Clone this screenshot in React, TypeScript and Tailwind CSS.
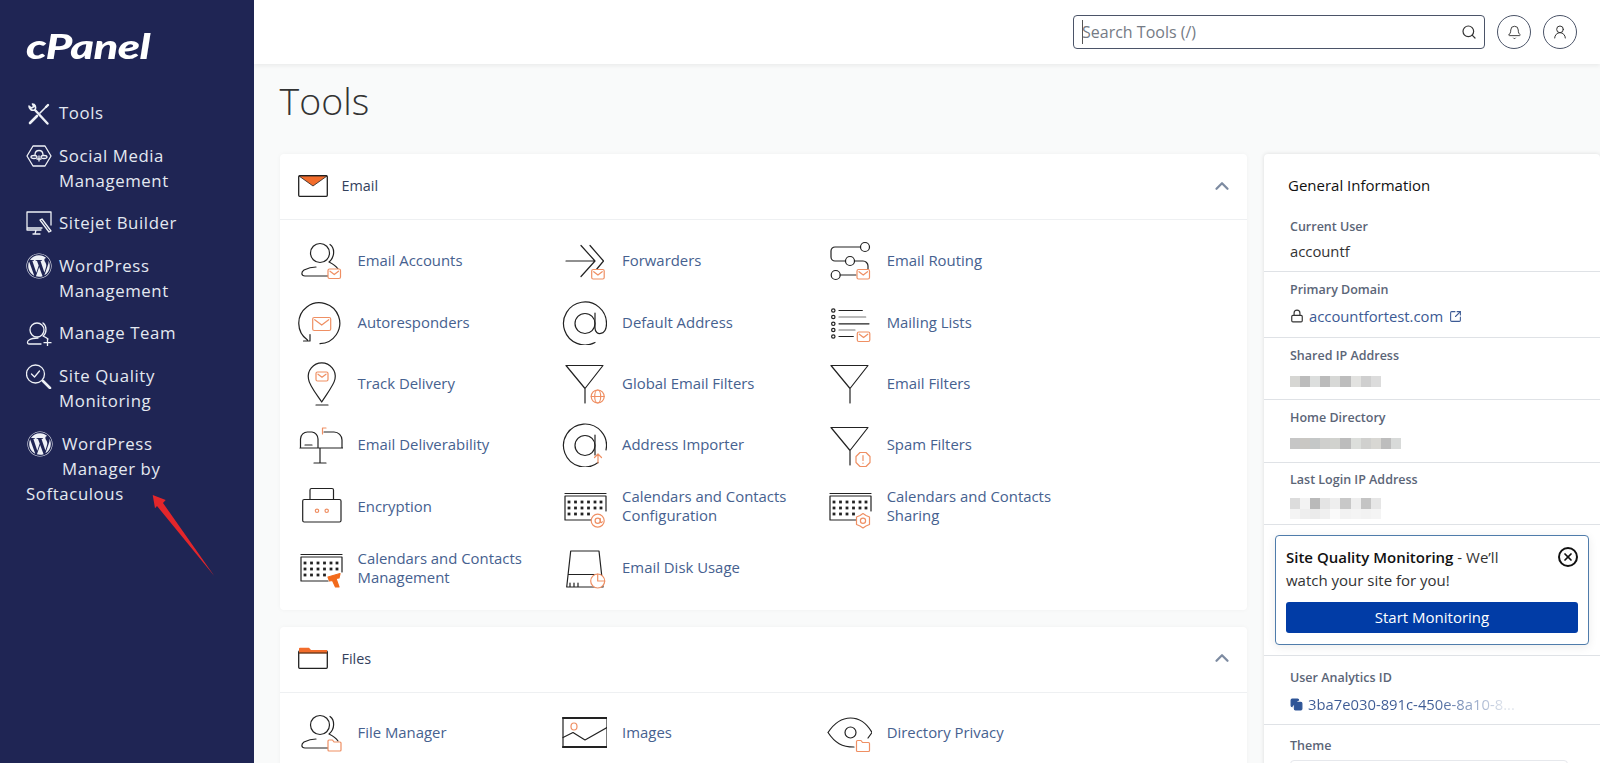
import { ReactNode } from 'react'
import { FaWordpress } from 'react-icons/fa'
import { ChevronUp, Search, Bell, UserRound, Lock, SquareArrowOutUpRight, Copy, X } from 'lucide-react'

const ORANGE = '#ef8f63'

function Ico({ children }: { children: ReactNode }) {
  return (
    <svg viewBox="0 0 45 45" className="w-[45px] h-[45px] shrink-0" fill="none" stroke="#222" strokeWidth="1.2" strokeLinecap="round" strokeLinejoin="round">
      {children}
    </svg>
  )
}

function MailBadge({ x, y, w = 12.5, h = 9.5 }: { x: number; y: number; w?: number; h?: number }) {
  return (
    <g stroke={ORANGE}>
      <rect x={x} y={y} width={w} height={h} rx="1.5" fill="#fff" />
      <path d={`M${x + 2} ${y + 2.2} L${x + w / 2} ${y + h * 0.58} L${x + w - 2} ${y + 2.2}`} />
    </g>
  )
}

function FolderBadge({ x, y }: { x: number; y: number }) {
  return <path stroke={ORANGE} fill="#fff" d={`M${x} ${y + 1} a1 1 0 0 1 1 -1 h3.5 l1.5 2 h6 a1 1 0 0 1 1 1 v7 a1 1 0 0 1 -1 1 h-11 a1 1 0 0 1 -1 -1 z`} />
}

function Person() {
  return (
    <>
      <circle cx="22" cy="15" r="9.5" />
      <path d="M32 6.5 C37 10 37 19 31 24 C35 26 38 28 40 31" />
      <path d="M30 38 H7 C3 38 3 34 6 32 C10 30 14 29 18 29" />
    </>
  )
}

function Funnel({ top = 4.5 }: { top?: number }) {
  return <path d={`M4 ${top} H41 L23 ${top + 23} Z M23 ${top + 23} V${top + 37.5}`} fill="#fff" />
}

function Calendar() {
  const rows = [18, 24, 30]
  const cols = [7, 13.5, 20, 26.5, 33, 39]
  return (
    <>
      <path d="M3 9.5 H44 M3 12 H44 M3 12 V36 H30 M44 12 V27" />
      {rows.map((y, r) =>
        cols.slice(0, r === 2 ? 4 : 6).map((x) => <rect key={`${x}-${y}`} x={x - 1.4} y={y - 1.4} width="2.8" height="2.8" fill="#222" stroke="none" />),
      )}
    </>
  )
}

const emailTools: { label: ReactNode; icon: ReactNode }[] = [
  { label: 'Email Accounts', icon: <Ico><Person /><MailBadge x={30} y={31} /></Ico> },
  { label: 'Forwarders', icon: <Ico><path d="M4 23 H33 M19 7.5 L33 23 L19 38.5 M28 7.5 L41.5 23 L34 32" /><MailBadge x={29.7} y={31.5} /></Ico> },
  { label: 'Email Routing', icon: <Ico><path d="M33.5 9 H8 a4 4 0 0 0 -4 4 v6 a4 4 0 0 0 4 4 H18.5 M27.5 23 H36 a5 5 0 0 1 5 5 V31 M13.2 37 H29" /><circle cx="38" cy="9" r="4.5" /><circle cx="23" cy="23" r="4.5" /><circle cx="8.7" cy="37" r="4.5" /><MailBadge x={30} y={31.5} /></Ico> },
  { label: 'Autoresponders', icon: <Ico><path d="M9.5 40 A20.5 20.5 0 1 1 22 43.7 M12 34.5 V41 H5.5" /><MailBadge x={14.7} y={17.5} w={18} h={13} /></Ico> },
  { label: 'Default Address', icon: <Ico><circle cx="23" cy="23.5" r="10" /><path d="M33 13 V28 C33 36 44.5 36 44.5 23.5 A21.5 21.5 0 1 0 33 42.5" /></Ico> },
  { label: 'Mailing Lists', icon: <Ico>{[10.5, 17, 23.8, 30, 36.5].map((y) => <circle key={y} cx="6.3" cy={y} r="1.7" />)}<path d="M12 10.5 H35.3 M12 23.8 H42 M12 36.5 H26.3" /><path stroke="#777" d="M12 17 H38.7 M12 30 H28" /><MailBadge x={30.3} y={32} /></Ico> },
  { label: 'Track Delivery', icon: <Ico><path d="M10.5 18 A13.5 13.5 0 1 1 37 18 C36 24 28 34 23.7 41 C19 34 11 24 10.5 18 M18 44 H30" /><MailBadge x={18} y={11} w={12} h={9} /></Ico> },
  { label: 'Global Email Filters', icon: <Ico><Funnel /><g stroke={ORANGE}><circle cx="35.7" cy="35.5" r="6.5" fill="#fff" /><ellipse cx="35.7" cy="35.5" rx="3" ry="6.5" /><path d="M29.2 35.5 H42.2" /></g></Ico> },
  { label: 'Email Filters', icon: <Ico><Funnel /></Ico> },
  { label: 'Email Deliverability', icon: <Ico><path d="M2 26 H45 M2.5 26 V17 A7 7 0 0 1 10 10 H14 A7 7 0 0 1 20 17 V26 M26 10 H36 A8 8 0 0 1 44 18 V26 M22 26 V41 M16 41 H28 M7 23 H14" /><path stroke={ORANGE} d="M24.5 12 V6 H28" /></Ico> },
  { label: 'Address Importer', icon: <Ico><circle cx="23" cy="23.5" r="10" /><path d="M33 13 V33 M36 40.6 A21.5 21.5 0 1 1 44 28" /><path stroke={ORANGE} d="M36 41 V32 M32.5 35.5 L36 32 L39.5 35.5" /></Ico> },
  { label: 'Spam Filters', icon: <Ico><Funnel top={5.5} /><g stroke={ORANGE}><path fill="#fff" d="M33 30.5 H39 L43 34.5 V40.5 L39 44.5 H33 L29 40.5 V34.5 Z" /><path d="M36 33.5 V38.5 M36 41 V41.3" /></g></Ico> },
  { label: 'Encryption', icon: <Ico><rect x="4.7" y="15.5" width="38.3" height="22.5" rx="1.5" /><path d="M12 15.5 V6 a1.5 1.5 0 0 1 1.5 -1.5 H34 a1.5 1.5 0 0 1 1.5 1.5 V15.5" /><g stroke={ORANGE}><circle cx="19" cy="26.8" r="1.7" /><circle cx="28.7" cy="26.8" r="1.7" /></g></Ico> },
  { label: <>Calendars and Contacts<br />Configuration</>, icon: <Ico><Calendar /><g stroke={ORANGE}><circle cx="35.7" cy="36.7" r="6.5" fill="#fff" /><circle cx="35.7" cy="36.7" r="2.6" /><path d="M38.3 34.5 V37.5 C38.3 39 40 39 40.2 37.5" /></g></Ico> },
  { label: <>Calendars and Contacts<br />Sharing</>, icon: <Ico><Calendar /><g stroke={ORANGE}><path fill="#fff" d="M36 29.5 L39 31.5 L42.5 33 V40.5 L39 42 L36 44 L33 42 L29.5 40.5 V33 L33 31.5 Z" /><circle cx="36" cy="36.7" r="2.6" /></g></Ico> },
  { label: <>Calendars and Contacts<br />Management</>, icon: <Ico><Calendar /><path fill="#f26a1b" stroke="#f26a1b" d="M30 32 L42 28.5 L41 33 L38 33.5 L41 42 L37.5 42 L34.5 35.5 L31.5 36 Z" /></Ico> },
  { label: 'Email Disk Usage', icon: <Ico><path d="M8.7 6 H37 L41 42 H4.7 Z M6.5 29.5 H39 M8 42 V38 M12 42 V38 M16 42 V38" /><g stroke={ORANGE}><circle cx="35.7" cy="36" r="7" fill="#fff" /><path d="M35.7 29 V36 H42.7" /></g></Ico> },
]

const fileTools: { label: string; icon: ReactNode }[] = [
  { label: 'File Manager', icon: <Ico><Person /><FolderBadge x={30} y={30} /></Ico> },
  { label: 'Images', icon: <Ico><rect x="1" y="7.5" width="44" height="30" /><path strokeWidth="2" d="M1 8 H45 M1 37 H45" /><path d="M1 27.5 L11 22.5 L23 30 L45 17.5" /><ellipse cx="12" cy="16.5" rx="3" ry="3.5" stroke={ORANGE} /></Ico> },
  { label: 'Directory Privacy', icon: <Ico><path d="M1 22.5 C8 12 15 8 23.5 8 C32 8 39 12 45 22.5 L41 28 M1 22.5 C8 33 15 37 27 37" /><circle cx="23.5" cy="22.5" r="5.5" /><FolderBadge x={29.5} y={30.5} /></Ico> },
]

function ToolGrid({ tools, top }: { tools: { label: ReactNode; icon: ReactNode }[]; top: string }) {
  return (
    <div className={`grid grid-cols-[repeat(3,264.6px)] pl-[18px] pb-[11.5px] ${top}`}>
      {tools.map((t, i) => (
        <div key={i} className="flex items-center gap-[15px] h-[61.4px] text-[14.9px] leading-[19px] text-[#46618f]">
          {t.icon}
          <span>{t.label}</span>
        </div>
      ))}
    </div>
  )
}

function Card({ title, icon, children }: { title: string; icon: ReactNode; children: ReactNode }) {
  return (
    <section className="bg-white rounded-[4px] shadow-[0_0_4px_rgba(0,0,0,0.04)]">
      <div className="flex items-center h-[66px] pl-[18px] pr-[14px] pb-[2px] border-b border-[#eef0f2]">
        {icon}
        <span className="ml-[14px] text-[14.4px] text-[#33415c]">{title}</span>
        <ChevronUp className="ml-auto w-[22px] h-[22px] text-[#7d8ba1]" strokeWidth={2.5} />
      </div>
      {children}
    </section>
  )
}

const navClass = 'text-[16.8px] leading-[25px] tracking-[0.6px] text-[#e4e9f1]'

function NavItem({ icon, children }: { icon: ReactNode; children: ReactNode }) {
  return (
    <div className={`flex gap-[7px] ${navClass}`}>
      <span className="w-[26px] h-[26px] shrink-0 flex items-center justify-center">{icon}</span>
      <span className="max-w-[130px]">{children}</span>
    </div>
  )
}

function NavSvg({ children }: { children: ReactNode }) {
  return (
    <svg viewBox="0 0 26 26" className="w-[26px] h-[26px]" fill="none" stroke="#eef1f6" strokeWidth="1.3" strokeLinecap="round" strokeLinejoin="round">
      {children}
    </svg>
  )
}

function Sidebar() {
  return (
    <aside className="relative w-[254px] shrink-0 bg-[#1f2554] pl-[26px]">
      <div className="h-[100px] pt-[22px] text-[35px] leading-[46px] font-black italic tracking-[-0.5px] text-white font-['Lato'] origin-left scale-x-[1.3]">cPanel</div>
      <nav className="flex flex-col gap-[17px]">
        <NavItem icon={<NavSvg><path strokeWidth="2.4" d="M9 10 L21.5 23.5" /><path strokeWidth="2.6" d="M4 23 L11 16" /><path strokeWidth="1.6" d="M14 13 L20 7" /><path strokeWidth="2.4" d="M20 7 L22 5" /><path strokeWidth="1.6" d="M9 10 C5.5 11 3 9 3 6 L5.5 8 L8 6.5 L6.5 4 C9 4 10.5 7 9 10 Z" /></NavSvg>}>Tools</NavItem>
        <NavItem icon={<NavSvg><path d="M1 13 L7 3 H19 L25 13 L19 23 H7 Z" /><path d="M9 12 C9 9 11 7.5 13 7.5 C15 7.5 17 9 17 12 M13 13 V18 M11 16 H15" /><ellipse cx="8" cy="14" rx="3" ry="1.5" /><ellipse cx="18" cy="14" rx="3" ry="1.5" /></NavSvg>}>Social Media Management</NavItem>
        <NavItem icon={<NavSvg><path d="M16 18 H1 V2 H25 V15 M1 18 V20 H15 M10 20 L9 24 M7 24 H14" /><path d="M14 10 L23 22 L25 21 L16 9 Z" /></NavSvg>}>Sitejet Builder</NavItem>
        <NavItem icon={<FaWordpress className="w-[26px] h-[26px] text-[#eef1f6]" />}>WordPress Management</NavItem>
        <NavItem icon={<NavSvg><circle cx="11" cy="10" r="7" /><path d="M17 3 C21 6 21 13 17 16 C19 17 21 18 22 19" /><path d="M15 24 H3 C1 24 1 21 3 20 C6 18 9 18 12 18" /><path d="M21.5 19.5 V26 M18 22.7 H25" /></NavSvg>}>Manage Team</NavItem>
        <NavItem icon={<NavSvg><circle cx="9.5" cy="11" r="9" /><path d="M5.5 11 L8.5 14 L13.5 8" /><path strokeWidth="2.6" d="M17 18 L24 25" /></NavSvg>}>Site Quality Monitoring</NavItem>
      </nav>
      <div className={`mt-[18px] ${navClass}`}>
        <FaWordpress className="float-left w-[26px] h-[26px] mr-[9px] mb-[24px] ml-[1px] text-[#eef1f6]" />
        WordPress<br />Manager by<br />Softaculous
      </div>
      <svg viewBox="0 0 70 90" className="absolute left-[150px] top-[490px] w-[70px] h-[90px]">
        <polygon points="2.7,5 15.7,10 13,13 64.3,86 7,16 5,18.3" fill="#e3262b" />
      </svg>
    </aside>
  )
}

function Mosaic({ rows }: { rows: string[][] }) {
  return (
    <div className="flex flex-col">
      {rows.map((row, r) => (
        <div key={r} className="flex">
          {row.map((c, i) => <span key={i} className={`w-[10.1px] h-[10.5px] ${c}`} />)}
        </div>
      ))}
    </div>
  )
}

function InfoRow({ label, children, h, gap = 'mt-[7px]' }: { label: string; children: ReactNode; h: string; gap?: string }) {
  return (
    <div className={`px-[26px] pt-[9px] border-b border-[#dfe2e6] ${h}`}>
      <div className="text-[12.5px] leading-[18px] font-semibold text-[#5b6577]">{label}</div>
      <div className={`${gap} text-[14.8px] leading-[20px] text-[#333]`}>{children}</div>
    </div>
  )
}

function InfoPanel() {
  return (
    <aside className="bg-white rounded-[4px] shadow-[0_0_4px_rgba(0,0,0,0.12)] h-[640px]">
      <div className="pl-[24px] pt-[20px] h-[63px] text-[15px] leading-[22px] font-medium text-[#111]">General Information</div>
      <InfoRow label="Current User" h="h-[55px] !pt-[1px]" gap="mt-[5px]">accountf</InfoRow>
      <InfoRow label="Primary Domain" h="h-[66px]">
        <span className="flex items-center gap-[5px] text-[#3c5a94]">
          <Lock className="w-[14px] h-[14px] text-[#333]" />
          accountfortest.com
          <SquareArrowOutUpRight className="ml-[1px] w-[13px] h-[13px]" />
        </span>
      </InfoRow>
      <InfoRow label="Shared IP Address" h="h-[62px]">
        <div className="pt-[4px]"><Mosaic rows={[['bg-[#d6d6d3]', 'bg-[#bcbcbc]', 'bg-[#dcdedd]', 'bg-[#bbbbbb]', 'bg-[#d7d8d6]', 'bg-[#bdbdbd]', 'bg-[#e2e2e0]', 'bg-[#cfcfcf]', 'bg-[#dcdcdc]']]} /></div>
      </InfoRow>
      <InfoRow label="Home Directory" h="h-[63px]">
        <div className="pt-[4px]"><Mosaic rows={[['bg-[#c6c6c6]', 'bg-[#c9c7c3]', 'bg-[#c4c7c7]', 'bg-[#cfcfcd]', 'bg-[#d1d2ce]', 'bg-[#bcbcbc]', 'bg-[#dcdedb]', 'bg-[#d0d0ce]', 'bg-[#d8d7d3]', 'bg-[#bdbdbd]', 'bg-[#d8dad9]']]} /></div>
      </InfoRow>
      <InfoRow label="Last Login IP Address" h="h-[62px] !pt-[8px]">
        <div className="pt-[2px]"><Mosaic rows={[['bg-[#dcdcdc]', 'bg-[#f3f3f3]', 'bg-[#b9b9b9]', 'bg-[#e4e4e4]', 'bg-[#eeeeee]', 'bg-[#c8c8c8]', 'bg-[#eeeeee]', 'bg-[#c4c4c4]', 'bg-[#e6e6e6]'], ['bg-[#f4f4f4]', 'bg-[#eeeeee]', 'bg-[#ebebeb]', 'bg-[#f0f0f0]', 'bg-[#fafafa]', 'bg-[#f2f2f2]', 'bg-[#f4f4f4]', 'bg-[#f2f2f2]', 'bg-[#f4f4f4]']]} /></div>
      </InfoRow>
      <div className="h-[131px] px-[11px] pt-[10px] border-b border-[#dfe2e6]">
        <div className="relative h-[110px] rounded-[4px] border border-[#4f7cab] bg-white px-[10px] pt-[10px] shadow-[0_2px_10px_rgba(0,0,0,0.08)]">
          <p className="text-[15px] leading-[23px] text-[#333]"><b className="font-semibold text-[#111]">Site Quality Monitoring</b> - We’ll<br />watch your site for you!</p>
          <button className="mt-[10px] w-full h-[31px] rounded-[3px] bg-[#013ca6] text-[15px] text-white">Start Monitoring</button>
          <span className="absolute right-[10px] top-[11px] w-[20px] h-[20px] rounded-full border-2 border-[#111] flex items-center justify-center">
            <X className="w-[12px] h-[12px] text-[#111]" strokeWidth={3.5} />
          </span>
        </div>
      </div>
      <InfoRow label="User Analytics ID" h="h-[69px] !pt-[13px]">
        <span className="flex items-center gap-[5px] text-[#3c5a94]">
          <Copy className="w-[13px] h-[13px] text-[#2f5597] fill-[#2f5597]" />
          <span className="bg-clip-text text-transparent bg-gradient-to-r from-[#3c5a94] from-60% to-[#dfe4ec] to-95%">3ba7e030-891c-450e-8a10-8...</span>
        </span>
      </InfoRow>
      <div className="px-[26px] pt-[12px]">
        <div className="text-[12.5px] leading-[18px] font-semibold text-[#5b6577]">Theme</div>
        <div className="mt-[5px] h-[36px] w-[278px] rounded-[4px] border border-[#e6e8ec]" />
      </div>
    </aside>
  )
}

export default function App() {
  return (
    <div className="flex h-screen overflow-hidden bg-[#f9fafa] font-['Open_Sans',sans-serif]">
      <Sidebar />
      <main className="flex-1 min-w-0">
        <header className="relative z-10 flex items-center justify-end gap-[12px] h-[64px] pr-[23px] bg-white shadow-[0_2px_4px_rgba(0,0,0,0.06)]">
          <div className="relative w-[412px] h-[34px]">
            <input readOnly placeholder="Search Tools (/)" className="w-full h-full rounded-[4px] border border-[#4b5468] pl-[8px] pr-[30px] text-[16px] outline-none placeholder:text-[#757b85]" />
            <span className="absolute left-[9px] top-[5px] h-[24px] w-px bg-[#555]" />
            <Search className="absolute right-[8px] top-[9px] w-[16px] h-[16px] text-[#333]" strokeWidth={1.8} />
          </div>
          <span className="w-[34px] h-[34px] rounded-full border border-[#4b5468] flex items-center justify-center">
            <Bell className="w-[15px] h-[15px] text-[#333]" strokeWidth={1.5} />
          </span>
          <span className="w-[34px] h-[34px] rounded-full border border-[#4b5468] flex items-center justify-center">
            <UserRound className="w-[16px] h-[16px] text-[#333]" strokeWidth={1.5} />
          </span>
        </header>
        <div className="pl-[25.5px]">
          <h1 className="h-[90px] pt-[12px] text-[37.5px] leading-[50px] font-light text-[#333]">Tools</h1>
          <div className="grid grid-cols-[967.5px_336px] gap-[17px] items-start">
            <div className="flex flex-col gap-[17px]">
              <Card
                title="Email"
                icon={
                  <svg viewBox="0 0 30 22" className="w-[30px] h-[22px]" fill="none">
                    <rect x="0.7" y="0.7" width="28.6" height="20.6" rx="1" fill="#fff" stroke="#222" strokeWidth="1.3" />
                    <path d="M1 1 H29 L15 11 Z" fill="#f26c2b" stroke="#222" strokeWidth="0.8" />
                  </svg>
                }
              >
                <ToolGrid tools={emailTools} top="pt-[10px]" />
              </Card>
              <Card
                title="Files"
                icon={
                  <svg viewBox="0 0 30 22" className="w-[30px] h-[22px]" fill="none">
                    <rect x="0.7" y="4" width="28.6" height="17.3" rx="1" fill="#fff" stroke="#222" strokeWidth="1.3" />
                    <path d="M1 5 V1.5 A1 1 0 0 1 2 0.7 H11 L13 3 H29 V6 H1 Z" fill="#f26c2b" />
                    <path d="M1 6 H29" stroke="#6b3a1c" strokeWidth="1.4" />
                  </svg>
                }
              >
                <ToolGrid tools={fileTools} top="pt-[9px]" />
              </Card>
            </div>
            <InfoPanel />
          </div>
        </div>
      </main>
    </div>
  )
}
